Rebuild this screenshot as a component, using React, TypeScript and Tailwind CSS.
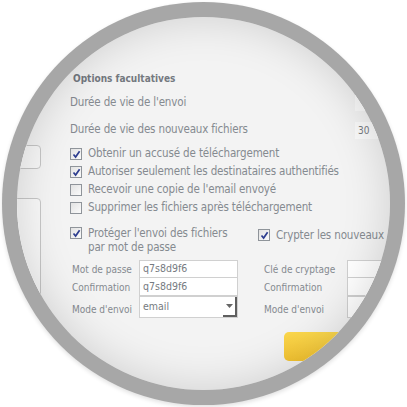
const font = { fontFamily: '"DejaVu Sans Condensed", "DejaVu Sans", Verdana, sans-serif' };

function Check({ checked }: { checked: boolean }) {
  return (
    <span className="flex h-[12px] w-[12px] shrink-0 items-center justify-center border border-[#8f949a] bg-gradient-to-br from-[#e2e2e2] to-[#fbfbfb]">
      {checked && (
        <svg width="9" height="9" viewBox="0 0 9 9">
          <path d="M1.5 4.5 L3.6 7 L7.6 1.3" fill="none" stroke="#2d3d8f" strokeWidth="1.7" />
        </svg>
      )}
    </span>
  );
}

function CheckRow({ checked, label }: { checked: boolean; label: string }) {
  return (
    <div className="flex h-[18px] items-center gap-[6px]">
      <Check checked={checked} />
      <span className="whitespace-nowrap text-[11.5px] tracking-[-0.15px]">{label}</span>
    </div>
  );
}

function Field({ label, value, tall, select, wide }: { label: string; value?: string; tall?: boolean; select?: boolean; wide?: boolean }) {
  return (
    <div className={`flex ${tall ? "h-[22px] items-end" : "h-[18px] items-center"}`}>
      <span className={`${wide ? "w-[85px]" : "w-[69px]"} shrink-0 whitespace-nowrap pl-[2px] text-[10px] ${tall ? "pb-[1px]" : ""}`}>{label}</span>
      <div className={`relative flex h-full w-[99px] shrink-0 border border-[#d0d0d0] bg-white pl-[3px] text-[10.5px] text-[#767b81] ${tall ? "items-start pt-[2px]" : "items-center"} ${label === "Confirmation" ? "border-t-0" : ""}`}>
        {value}
        {select && (
          <span className="absolute right-0 top-0 flex h-full w-[14px] items-center justify-center border-b-2 border-r-2 border-[#5f5f5f]">
            <svg width="7" height="4" viewBox="0 0 7 4">
              <path d="M0 0 H7 L3.5 4 Z" fill="#666" />
            </svg>
          </span>
        )}
      </div>
    </div>
  );
}

export default function App() {
  return (
    <div className="relative h-[407px] w-[407px] overflow-hidden bg-white" style={font}>
      <div className="absolute left-[2px] top-[2px] h-[403px] w-[403px] rounded-full bg-[#a7a7a7] p-[15px] shadow-[0_2px_4px_rgba(0,0,0,0.12)]">
        <div className="relative h-full w-full overflow-hidden rounded-full bg-[#f3f3f3] text-[#858a90]">
          <div className="flex pt-[55px]">
            {/* panneaux de gauche */}
            <div className="flex w-[24px] shrink-0 flex-col pt-[73px]">
              <div className="-ml-[20px] h-[24px] w-[44px] rounded-r-[4px] border border-[#c6c6c6] bg-[#f7f7f7]" />
              <div className="-ml-[20px] mt-[29px] h-[200px] w-[44px] rounded-tr-[4px] border border-[#c6c6c6] bg-[#f7f7f7]" />
            </div>

            <div className="ml-[29px] flex flex-1 flex-col">
              <div className="h-[14px] pl-[3px] text-[10px] font-bold leading-[14px] text-[#747980]">Options facultatives</div>

              <div className="mt-[8px] flex h-[18px] items-center">
                <span className="w-[285px] shrink-0 text-[11.5px] tracking-[-0.15px]">Durée de vie de l'envoi</span>
                <span className="h-[16px] w-[40px] bg-[#fafafa]" />
              </div>
              <div className="mt-[9px] flex h-[18px] items-center">
                <span className="w-[285px] shrink-0 text-[11.5px] tracking-[-0.15px]">Durée de vie des nouveaux fichiers</span>
                <span className="flex h-[17px] w-[40px] items-center bg-[#fafafa] pl-[3px] text-[10px] text-[#767b81]">30</span>
              </div>

              <div className="mt-[6px] flex flex-col">
                <CheckRow checked label="Obtenir un accusé de téléchargement" />
                <CheckRow checked label="Autoriser seulement les destinataires authentifiés" />
                <CheckRow checked={false} label="Recevoir une copie de l'email envoyé" />
                <CheckRow checked={false} label="Supprimer les fichiers après téléchargement" />
              </div>

              <div className="mt-[9px] flex">
                <div className="flex w-[188px] shrink-0 gap-[6px] pt-[1px]">
                  <Check checked />
                  <span className="-mt-[1px] text-[11.5px] leading-[14px] tracking-[-0.15px]">
                    Protéger l'envoi des fichiers
                    <br />
                    par mot de passe
                  </span>
                </div>
                <div className="flex items-start gap-[6px] pt-[3px]">
                  <Check checked />
                  <span className="-mt-[1px] whitespace-nowrap text-[11.5px] leading-[14px] tracking-[-0.15px]">Crypter les nouveaux</span>
                </div>
              </div>

              <div className="mt-[6px] flex">
                <div className="flex w-[192px] shrink-0 flex-col">
                  <Field label="Mot de passe" value="q7s8d9f6" />
                  <Field label="Confirmation" value="q7s8d9f6" />
                  <Field label="Mode d'envoi" value="email" tall select />
                </div>
                <div className="flex flex-col">
                  <Field label="Clé de cryptage" wide />
                  <Field label="Confirmation" wide />
                  <Field label="Mode d'envoi" tall wide />
                </div>
              </div>

              <div className="ml-[214px] mt-[14px] h-[29px] w-[110px] rounded-[5px] bg-gradient-to-b from-[#fcd84c] to-[#f6c531]" />
            </div>
          </div>
          <div className="pointer-events-none absolute inset-0 rounded-full shadow-[inset_0_0_45px_rgba(0,0,0,0.15)]" />
        </div>
      </div>
    </div>
  );
}
